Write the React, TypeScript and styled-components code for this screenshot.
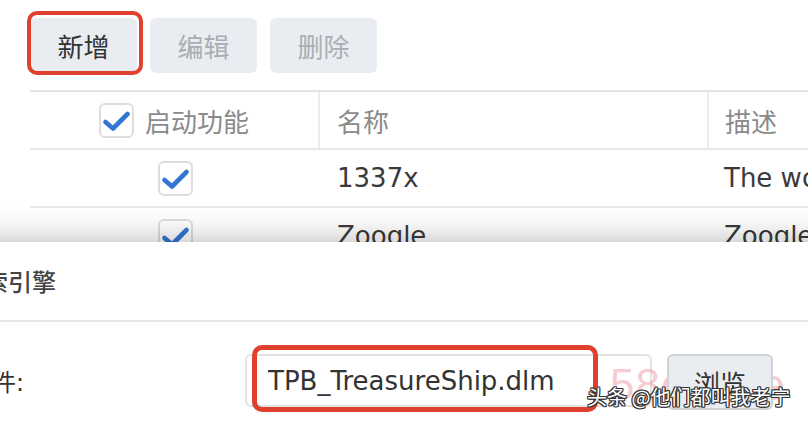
import React from "react";
import styled, { createGlobalStyle } from "styled-components";

const GlobalStyle = createGlobalStyle`
  html, body { margin: 0; padding: 0; background: #fff; }
  body { font-family: "DejaVu Sans", "Noto Sans CJK SC", sans-serif; }
  * { box-sizing: border-box; }
`;

const Screen = styled.div`
  position: relative;
  width: 808px;
  height: 422px;
  overflow: hidden;
  background: #fff;
`;

const Page = styled.div`
  padding: 18px 0 0 30px;
`;

const Toolbar = styled.div`
  display: flex;
  gap: 13px;
`;

const ToolButton = styled.button<{ $disabled?: boolean }>`
  width: 107px;
  height: 55px;
  border: none;
  border-radius: 6px;
  background: #e9edf1;
  color: ${(p) => (p.$disabled ? "#a9aeb4" : "#333")};
  font: 26px "Noto Sans CJK SC", sans-serif;
  padding: 0;
  display: flex;
  align-items: center;
  justify-content: center;
`;

const Table = styled.div`
  margin-top: 17px;
`;

const Row = styled.div<{ $header?: boolean }>`
  display: grid;
  grid-template-columns: 290px 389px 1fr;
  height: ${(p) => (p.$header ? "60px" : "58px")};
  border-top: ${(p) => (p.$header ? "2px solid #e4e4e4" : "none")};
  border-bottom: 2px solid #e8e8e8;
`;

const Cell = styled.div<{ $header?: boolean; $center?: boolean; $divider?: boolean; $pad?: number }>`
  display: flex;
  align-items: center;
  justify-content: ${(p) => (p.$center ? "center" : "flex-start")};
  gap: 11px;
  padding-left: ${(p) => p.$pad ?? 0}px;
  border-right: ${(p) => (p.$divider ? "2px solid #ececec" : "none")};
  white-space: nowrap;
  overflow: hidden;
  font-size: 26px;
  color: ${(p) => (p.$header ? "#8a8a8a" : "#3a3a3a")};
`;

const CheckBox = styled.span`
  width: 35px;
  height: 35px;
  flex: none;
  border: 2px solid #dedede;
  border-radius: 6px;
  background: #fff;
  display: flex;
  align-items: center;
  justify-content: center;
`;

const Check = () => (
  <CheckBox>
    <svg width="31" height="31" viewBox="0 0 31 31">
      <path
        d="M4.5 17 L12 23.5 L26.5 9"
        fill="none"
        stroke="#3476d2"
        strokeWidth="4.6"
        strokeLinecap="round"
        strokeLinejoin="round"
      />
    </svg>
  </CheckBox>
);

const Dialog = styled.div`
  position: absolute;
  top: 242px;
  left: -40px;
  width: 900px;
  height: 260px;
  background: #fff;
  box-shadow: 0 0 32px rgba(0, 0, 0, 0.3);
`;

const DialogHeader = styled.div`
  height: 80px;
  display: flex;
  align-items: center;
  border-bottom: 2px solid #e6e6e6;
`;

const DialogTitle = styled.div`
  font: 500 24px "Noto Sans CJK SC", sans-serif;
  color: #444;
  padding-bottom: 2px;
`;

const DialogBody = styled.div`
  position: relative;
  padding: 32px 0 0 8px;
`;

const FieldRow = styled.div`
  display: grid;
  grid-template-columns: 262px 407px 106px;
  gap: 15px;
  align-items: start;
`;

const FieldLabel = styled.div`
  height: 53px;
  display: flex;
  align-items: center;
  font-size: 24px;
  color: #333;
`;

const FileInput = styled.input`
  width: 407px;
  height: 53px;
  border: 2px solid #e2e2e2;
  border-radius: 6px;
  padding: 0 0 0 21px;
  font: 26px "DejaVu Sans", sans-serif;
  color: #333;
  background: transparent;
  outline: none;
`;

const BrowseButton = styled.button`
  position: relative;
  z-index: 2;
  width: 106px;
  height: 56px;
  border: 2px solid #cfd3d7;
  border-radius: 6px;
  background: #e9edf1;
  color: #333;
  font: 26px "Noto Sans CJK SC", sans-serif;
  padding: 0;
`;

const PinkMark = styled.div`
  position: absolute;
  z-index: 1;
  left: 650px;
  top: 38px;
  font: 44px "Liberation Sans", sans-serif;
  letter-spacing: 1px;
  color: rgba(232, 120, 140, 0.4);
  white-space: nowrap;
  pointer-events: none;
`;

const Annotation = styled.div<{ $w: number }>`
  position: absolute;
  z-index: 10;
  border: ${(p) => p.$w}px solid #e0412f;
  border-radius: 10px;
  pointer-events: none;
`;

const Watermark = styled.div`
  position: absolute;
  z-index: 11;
  left: 587px;
  top: 382px;
  font: 20px "Noto Sans CJK SC", sans-serif;
  color: #fff;
  white-space: nowrap;
  text-shadow: 1px 0 0 #333, -1px 0 0 #333, 0 1px 0 #333, 0 -1px 0 #333,
    1px 1px 0 #333, -1px -1px 0 #333, 1px -1px 0 #333, -1px 1px 0 #333;
`;

const rows = [
  { name: "1337x", desc: "The world's largest torrent site" },
  { name: "Zoogle", desc: "Zoogle search engine" },
];

export default function App() {
  return (
    <>
      <GlobalStyle />
      <Screen>
        <Page>
          <Toolbar>
            <ToolButton>新增</ToolButton>
            <ToolButton $disabled>编辑</ToolButton>
            <ToolButton $disabled>删除</ToolButton>
          </Toolbar>
          <Table>
            <Row $header>
              <Cell $header $center $divider>
                <Check />
                <span>启动功能</span>
              </Cell>
              <Cell $header $divider $pad={17}>
                名称
              </Cell>
              <Cell $header $pad={16}>
                描述
              </Cell>
            </Row>
            {rows.map((r) => (
              <Row key={r.name}>
                <Cell $center>
                  <Check />
                </Cell>
                <Cell $pad={17}>{r.name}</Cell>
                <Cell $pad={15}>{r.desc}</Cell>
              </Row>
            ))}
          </Table>
        </Page>

        <Dialog>
          <DialogHeader>
            <DialogTitle>搜索引擎</DialogTitle>
          </DialogHeader>
          <DialogBody>
            <FieldRow>
              <FieldLabel>文件:</FieldLabel>
              <FileInput readOnly defaultValue="TPB_TreasureShip.dlm" />
              <BrowseButton>浏览</BrowseButton>
            </FieldRow>
            <PinkMark>58ooose</PinkMark>
          </DialogBody>
        </Dialog>

        <Annotation $w={4} style={{ left: 27, top: 11, width: 116, height: 64 }} />
        <Annotation $w={5} style={{ left: 252, top: 345, width: 346, height: 67 }} />
        <Watermark>头条 @他们都叫我老宁</Watermark>
      </Screen>
    </>
  );
}
